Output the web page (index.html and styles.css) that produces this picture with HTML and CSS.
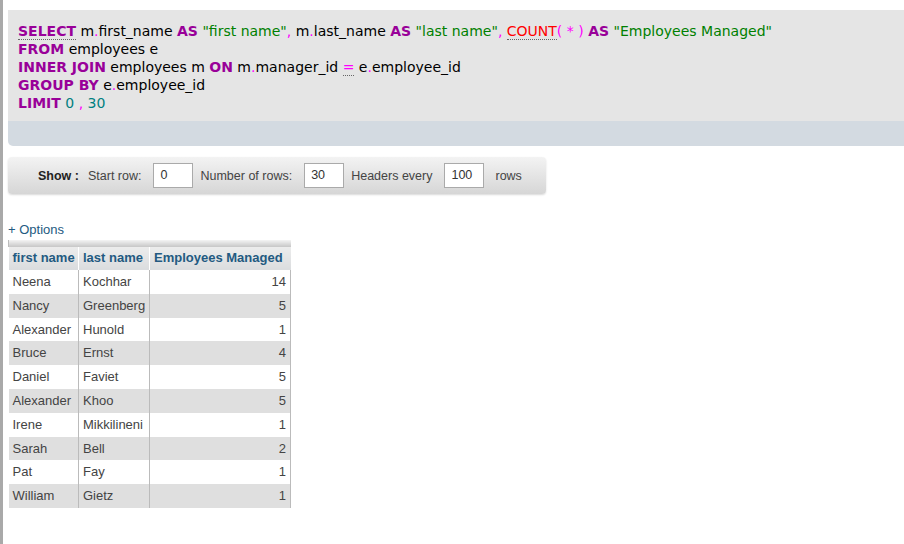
FILE: index.html
```html
<!DOCTYPE html>
<html>
<head>
<meta charset="utf-8">
<link rel="stylesheet" href="styles.css">
</head>
<body>
<div class="page">
  <div class="sqlbox">
    <div class="sql">
      <div><span class="kw u">SELECT</span> m<span class="p">.</span>first_name <span class="kw">AS</span> <span class="str">"first name"</span><span class="p">,</span> m<span class="p">.</span>last_name <span class="kw">AS</span> <span class="str">"last name"</span><span class="p">,</span> <span class="fn u">COUNT</span><span class="p">(</span> <span class="p">*</span> <span class="p">)</span> <span class="kw">AS</span> <span class="str">"Employees Managed"</span></div>
      <div><span class="kw">FROM</span> employees e</div>
      <div><span class="kw">INNER JOIN</span> employees m <span class="kw">ON</span> m<span class="p">.</span>manager_id <span class="p u">=</span> e<span class="p">.</span>employee_id</div>
      <div><span class="kw">GROUP BY</span> e<span class="p">.</span>employee_id</div>
      <div><span class="kw">LIMIT</span> <span class="num">0</span> <span class="p">,</span> <span class="num">30</span></div>
    </div>
    <div class="sqlfoot"></div>
  </div>

  <div class="navbar">
    <b class="show">Show :</b>
    <span class="lbl">Start row:</span>
    <span class="inp">0</span>
    <span class="lbl">Number of rows:</span>
    <span class="inp">30</span>
    <span class="lbl">Headers every</span>
    <span class="inp last">100</span>
    <span class="lbl">rows</span>
  </div>

  <div class="options">+ Options</div>

  <table class="data">
    <colgroup><col class="c1"><col class="c2"><col class="c3"></colgroup>
    <thead>
      <tr class="strip"><td colspan="3"></td></tr>
      <tr class="hdr"><th>first name</th><th>last name</th><th>Employees Managed</th></tr>
    </thead>
    <tbody>
      <tr><td>Neena</td><td>Kochhar</td><td class="n">14</td></tr>
      <tr><td>Nancy</td><td>Greenberg</td><td class="n">5</td></tr>
      <tr><td>Alexander</td><td>Hunold</td><td class="n">1</td></tr>
      <tr><td>Bruce</td><td>Ernst</td><td class="n">4</td></tr>
      <tr><td>Daniel</td><td>Faviet</td><td class="n">5</td></tr>
      <tr><td>Alexander</td><td>Khoo</td><td class="n">5</td></tr>
      <tr><td>Irene</td><td>Mikkilineni</td><td class="n">1</td></tr>
      <tr><td>Sarah</td><td>Bell</td><td class="n">2</td></tr>
      <tr><td>Pat</td><td>Fay</td><td class="n">1</td></tr>
      <tr><td>William</td><td>Gietz</td><td class="n">1</td></tr>
    </tbody>
  </table>
</div>
</body>
</html>
```

FILE: styles.css
```css
html, body {
  margin: 0;
  padding: 0;
  background: #fff;
  overflow: hidden;
}
body {
  width: 904px;
  height: 544px;
  border-left: 3px solid #a9a9a9;
  box-sizing: border-box;
  font-family: "Liberation Sans", Arial, sans-serif;
}
.page {
  padding: 10px 0 0 5px;
}
.sqlbox {
  width: 920px;
  border-radius: 0 0 0 5px;
  overflow: hidden;
}
.sql {
  background: #e5e5e5;
  padding: 12px 10px 9px 10px;
  font-family: "DejaVu Sans", Verdana, sans-serif;
  font-size: 14px;
  line-height: 18px;
  color: #000;
  white-space: nowrap;
}
.sqlfoot {
  height: 25px;
  background: #d3dae1;
}
.kw { color: #990099; font-weight: bold; }
.str { color: #008000; }
.p { color: #ff00ff; }
.fn { color: #ff0000; }
.num { color: #008080; }
.u { border-bottom: 1px dotted #666; }

.navbar {
  margin-top: 11px;
  width: 538px;
  height: 37px;
  box-sizing: border-box;
  border-radius: 4px;
  background: linear-gradient(#f3f3f3, #d6d6d6);
  box-shadow: 0 1px 2px rgba(0,0,0,0.15);
  display: flex;
  align-items: center;
  padding-left: 30px;
  font-size: 12.5px;
  color: #444;
}
.show { color: #222; margin-right: 9px; }
.lbl { margin-right: 12px; }
.inp {
  display: inline-block;
  width: 40px;
  height: 25px;
  box-sizing: border-box;
  border: 1px solid #aaa;
  background: #fff;
  padding-left: 6px;
  line-height: 23px;
  color: #333;
  margin-right: 7px;
}
.inp.last { margin-right: 11px; }

.options {
  margin-top: 28px;
  font-size: 13px;
  line-height: 16px;
  color: #235a81;
}

.data {
  margin-top: 2px;
  border-collapse: collapse;
  table-layout: fixed;
  width: 282px;
  font-size: 13px;
  color: #444;
}
.c1 { width: 70px; }
.c2 { width: 71px; }
.c3 { width: 141px; }
.data .strip td {
  height: 7px;
  padding: 0;
  background: linear-gradient(#f4f4f4, #c6c6c6);
}
.data th {
  background: linear-gradient(#ececec, #dadcde);
  color: #235a81;
  font-weight: bold;
  text-align: left;
  padding: 3px 4px 4px 4px;
  line-height: 16px;
  border-left: 1px solid #fff;
  white-space: nowrap;
}
.data th:first-child { border-left: none; }
.data td {
  padding: 4px;
  line-height: 15.8px;
  border-left: 1px solid #bbb;
  white-space: nowrap;
}
.data tbody td:last-child { border-right: 1px solid #bbb; }
.data tbody td:first-child { border-left: none; }
.data tbody tr:nth-child(even) td { background: #dfdfdf; }
.data tbody tr:nth-child(odd) td { background: #fff; }
.data td.n { text-align: right; }
```
